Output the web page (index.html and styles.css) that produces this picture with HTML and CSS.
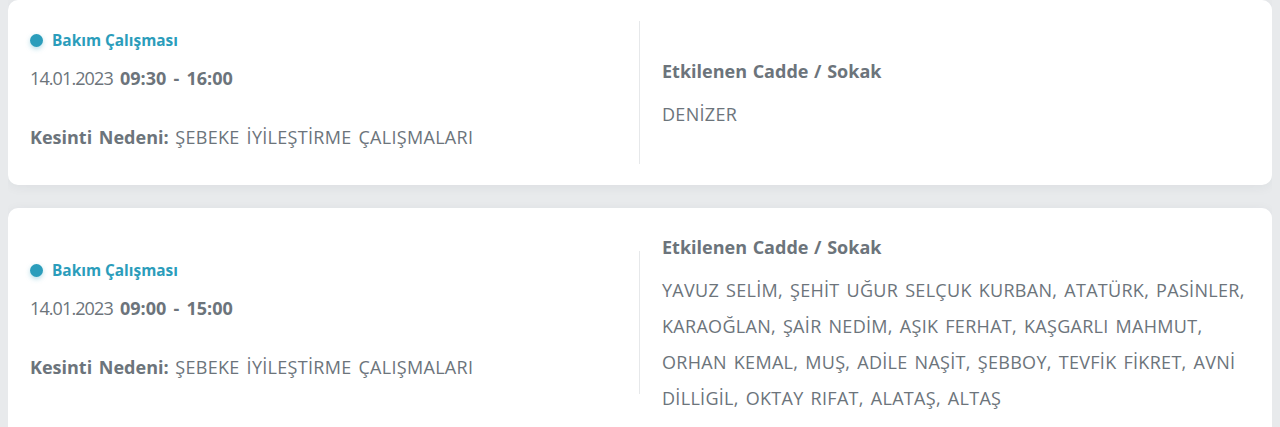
FILE: index.html
```html
<!DOCTYPE html>
<html lang="tr">
<head>
<meta charset="utf-8">
<title>Planlı Kesintiler</title>
<link rel="stylesheet" href="styles.css">
</head>
<body>
  <div class="outage-list">
    <article class="outage-card">
      <div class="outage-main">
        <div class="outage-type"><span class="type-dot"></span>Bakım Çalışması</div>
        <div class="outage-time"><span class="outage-day">14.01.2023</span> <strong>09:30 - 16:00</strong></div>
        <div class="outage-reason"><strong>Kesinti Nedeni:</strong> <span class="reason-text">ŞEBEKE İYİLEŞTİRME ÇALIŞMALARI</span></div>
      </div>
      <div class="outage-streets">
        <h4 class="streets-title">Etkilenen Cadde / Sokak</h4>
        <p class="streets-list">DENİZER</p>
      </div>
    </article>

    <article class="outage-card">
      <div class="outage-main">
        <div class="outage-type"><span class="type-dot"></span>Bakım Çalışması</div>
        <div class="outage-time"><span class="outage-day">14.01.2023</span> <strong>09:00 - 15:00</strong></div>
        <div class="outage-reason"><strong>Kesinti Nedeni:</strong> <span class="reason-text">ŞEBEKE İYİLEŞTİRME ÇALIŞMALARI</span></div>
      </div>
      <div class="outage-streets">
        <h4 class="streets-title">Etkilenen Cadde / Sokak</h4>
        <p class="streets-list">YAVUZ SELİM, ŞEHİT UĞUR SELÇUK KURBAN, ATATÜRK, PASİNLER, KARAOĞLAN, ŞAİR NEDİM, AŞIK FERHAT, KAŞGARLI MAHMUT, ORHAN KEMAL, MUŞ, ADİLE NAŞİT, ŞEBBOY, TEVFİK FİKRET, AVNİ DİLLİGİL, OKTAY RIFAT, ALATAŞ, ALTAŞ</p>
      </div>
    </article>
  </div>
</body>
</html>
```

FILE: styles.css
```css
* {
  box-sizing: border-box;
}

html,
body {
  background: #e8eaec;
}

body {
  margin: 0 8px;
  font-family: "Open Sans", "Noto Sans", sans-serif;
  color: #6c747b;
}

.outage-list {
  display: flex;
  flex-direction: column;
  gap: 23px;
}

.outage-card {
  display: flex;
  align-items: center;
  background: #ffffff;
  border-radius: 10px;
  padding: 21px 0;
  box-shadow: 0 2px 12px rgba(40, 50, 60, 0.06);
}

.outage-main {
  flex: 0 0 632px;
  padding: 9px 22px 14px;
  border-right: 1px solid #e6e8ea;
}

.outage-type {
  display: flex;
  align-items: center;
  gap: 9px;
  height: 20px;
  font-size: 15.4px;
  font-weight: 700;
  color: #2b9dbb;
}

.type-dot {
  width: 13px;
  height: 13px;
  border-radius: 50%;
  background: #2b9dbb;
  box-shadow: 0 2px 5px rgba(43, 157, 187, 0.35);
}

.outage-time {
  margin-top: 15px;
  font-size: 18px;
  line-height: 26px;
  word-spacing: 2.5px;
}

.outage-day {
  letter-spacing: -0.9px;
}

.outage-reason {
  margin-top: 33px;
  font-size: 18px;
  line-height: 26px;
  word-spacing: 2px;
}

.reason-text {
  letter-spacing: 0.3px;
}

.outage-time strong,
.outage-reason strong {
  font-weight: 700;
}

.outage-streets {
  flex: 1;
  padding: 0 22px;
}

.streets-title {
  margin: 0 0 7px;
  font-size: 18px;
  font-weight: 700;
  line-height: 36px;
  word-spacing: 1px;
}

.streets-list {
  margin: 0;
  font-size: 18px;
  line-height: 36px;
  letter-spacing: 0.3px;
  word-spacing: 2px;
}
```
